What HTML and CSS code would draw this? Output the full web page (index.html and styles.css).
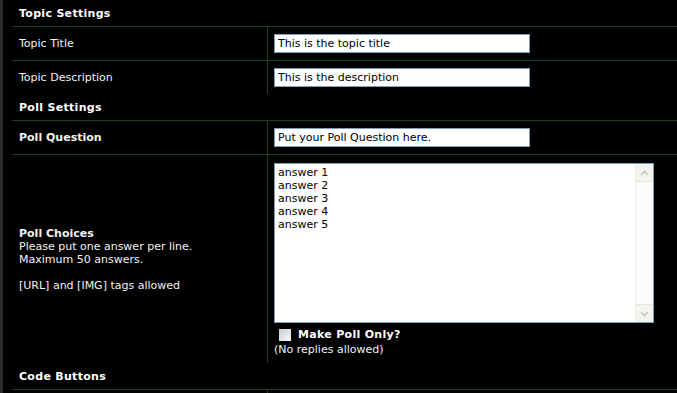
FILE: index.html
```html
<!DOCTYPE html>
<html>
<head>
    <title>Post Options</title>
    <link rel="stylesheet" href="styles.css">
</head>

<body>
    <div class="frame">
        <table class="form">
            <tr class="head">
                <td colspan="2">Topic Settings</td>
            </tr>
            <tr class="row">
                <td class="label">Topic Title</td>
                <td class="field"><input class="text" type="text" value="This is the topic title"></td>
            </tr>
            <tr class="row">
                <td class="label">Topic Description</td>
                <td class="field"><input class="text" type="text" value="This is the description"></td>
            </tr>
            <tr class="head">
                <td colspan="2">Poll Settings</td>
            </tr>
            <tr class="row">
                <td class="label"><b>Poll Question</b></td>
                <td class="field"><input class="text" type="text" value="Put your Poll Question here."></td>
            </tr>
            <tr class="row">
                <td class="label">
                    <b>Poll Choices</b><br>
                    Please put one answer per line.<br>
                    Maximum 50 answers.<br>
                    <br>
                    [URL] and [IMG] tags allowed
                </td>
                <td class="field choices">
                    <div class="area">
                        <textarea>answer 1
answer 2
answer 3
answer 4
answer 5</textarea>
                        <div class="scroll">
                            <span class="arrow">
                                <svg width="9" height="6" viewBox="0 0 9 6"><path d="M1 5 L4.5 1.5 L8 5" fill="none" stroke="#c9c9c0" stroke-width="1.6"/></svg>
                            </span>
                            <span class="track"></span>
                            <span class="arrow">
                                <svg width="9" height="6" viewBox="0 0 9 6"><path d="M1 1 L4.5 4.5 L8 1" fill="none" stroke="#c9c9c0" stroke-width="1.6"/></svg>
                            </span>
                        </div>
                    </div>
                    <label class="check"><span class="box"></span><b>Make Poll Only?</b></label>
                    <div class="note">(No replies allowed)</div>
                </td>
            </tr>
            <tr class="head">
                <td colspan="2">Code Buttons</td>
            </tr>
            <tr class="row tail">
                <td class="label"></td>
                <td class="field"></td>
            </tr>
        </table>
    </div>
</body>

</html>
```

FILE: styles.css
```css
body {
    margin: 0;
    padding: 0;
    background-color: #000;
    color: #f2f2f2;
    font-family: "DejaVu Sans", Verdana, sans-serif;
    font-size: 11px;
    line-height: 13px;
    overflow: hidden;
    height: 393px;
}
.frame {
    border-left: 3px solid #2c2c2c;
    padding-left: 9px;
    height: 393px;
    overflow: hidden;
}
.form {
    width: 100%;
    border-collapse: collapse;
}
.form td {
    padding: 0;
    vertical-align: middle;
}
.head td {
    height: 26px;
    padding-left: 7px;
    font-weight: bold;
    letter-spacing: 0.3px;
    color: #fff;
}
.row td {
    border-top: 1px solid #1f3d1f;
}
.label {
    width: 248px;
    padding-left: 7px !important;
    border-right: 1px solid #1f3d1f;
}
.field {
    padding: 7px 6px 7px 6px !important;
    height: 19px;
}
.tail td {
    height: 4px;
    padding: 0 !important;
}
.text {
    display: block;
    box-sizing: border-box;
    width: 256px;
    height: 19px;
    margin: 0;
    padding: 0 3px;
    border: 1px solid #7f9db9;
    background: #fff;
    color: #000;
    font-family: "DejaVu Sans", Verdana, sans-serif;
    font-size: 11px;
}
.choices {
    padding-top: 8px !important;
    padding-bottom: 7px !important;
}
.area {
    display: flex;
    width: 380px;
    height: 160px;
    box-sizing: border-box;
    border: 1px solid #7f9db9;
    background: #fff;
}
.area textarea {
    flex: 1;
    margin: 0;
    padding: 2px 3px;
    border: none;
    resize: none;
    outline: none;
    overflow: hidden;
    font-family: "DejaVu Sans", Verdana, sans-serif;
    font-size: 11px;
    line-height: 13px;
    color: #000;
}
.scroll {
    width: 17px;
    display: flex;
    flex-direction: column;
    background: #fcfcfa;
    border-left: 1px solid #f0f0ea;
}
.arrow {
    height: 17px;
    display: flex;
    align-items: center;
    justify-content: center;
    background: #f4f4ee;
    border-bottom: 1px solid #e6e6dc;
}
.arrow:last-child {
    border-bottom: none;
    border-top: 1px solid #e6e6dc;
}
.track {
    flex: 1;
}
.check {
    display: flex;
    align-items: center;
    gap: 7px;
    margin-top: 5px;
    padding-left: 5px;
    color: #fff;
}
.check b {
    letter-spacing: 0.3px;
}
.box {
    width: 12px;
    height: 12px;
    background: linear-gradient(135deg, #c5cdd6, #f6f7f8);
}
.note {
    margin-top: 2px;
}
```
